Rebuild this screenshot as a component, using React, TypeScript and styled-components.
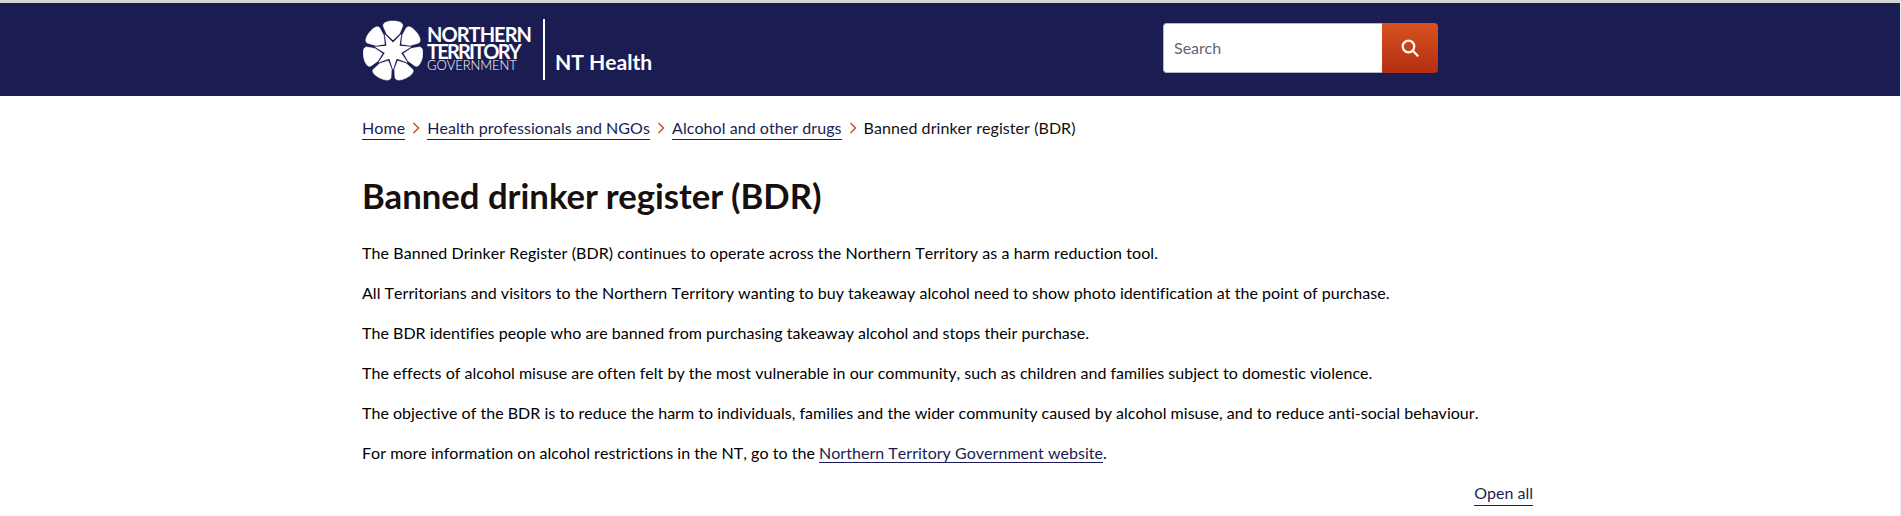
import React, { FC } from 'react';
import styled, { createGlobalStyle } from 'styled-components';

const GlobalStyle = createGlobalStyle`
  html, body {
    margin: 0;
    padding: 0;
    background: #fff;
    height: 516px;
    overflow: hidden;
  }
  body {
    font-family: Lato, 'Liberation Sans', sans-serif;
    color: #000;
    border-top: 3px solid #d4d4d4;
    border-right: 1px solid #ececec;
    box-sizing: border-box;
    font-kerning: none;
    font-variant-ligatures: none;
  }
`;

const Header = styled('header')`
  background: #1b1d52;
  height: 93px;
`;

const HeaderInner = styled('div')`
  display: flex;
  align-items: flex-start;
  padding-left: 362px;
`;

const Brand = styled('a')`
  display: flex;
  align-items: flex-start;
  width: 801px;
  padding-top: 16px;
  color: #fff;
  text-decoration: none;
`;

const Wordmark = styled('div')`
  display: flex;
  flex-direction: column;
  margin: 7px 0 0 4px;
  width: 105px;
`;

const WordLine = styled('span')<{ spacing: number; light?: boolean }>`
  display: block;
  white-space: nowrap;
  font-size: ${props => (props.light ? '13px' : '20px')};
  font-weight: ${props => (props.light ? 300 : 700)};
  line-height: ${props => (props.light ? '12px' : '16.5px')};
  letter-spacing: ${props => props.spacing}px;
`;

const Divider = styled('div')`
  width: 2px;
  height: 61px;
  background: #fff;
  margin-left: 11px;
`;

const SiteName = styled('span')`
  font-size: 21.1px;
  font-weight: 700;
  line-height: 25px;
  margin: 30px 0 0 10px;
`;

const SearchForm = styled('form')`
  display: flex;
  margin-top: 20px;
  width: 275px;
  height: 50px;
`;

const SearchInput = styled('input')`
  flex: 1;
  min-width: 0;
  box-sizing: border-box;
  border: 1px solid #b3b6cb;
  border-right: 0;
  border-radius: 4px 0 0 4px;
  padding: 0 10px 2px;
  background: #fff;
  font-family: Lato, sans-serif;
  font-size: 16px;
  outline: none;
  &::placeholder {
    color: #5f6770;
    opacity: 1;
  }
`;

const SearchButton = styled('button')`
  width: 56px;
  border: 0;
  padding: 0;
  border-radius: 0 4px 4px 0;
  background: linear-gradient(#d8521f, #b32f12);
  display: flex;
  align-items: center;
  justify-content: center;
`;

const Main = styled('main')`
  width: 1171px;
  padding-left: 362px;
  font-size: 16px;
`;

const Breadcrumbs = styled('nav')`
  display: flex;
  align-items: center;
  margin-top: 20px;
  height: 24px;
  line-height: 24px;
  letter-spacing: 0.06px;
`;

const TextLink = styled('a')`
  color: #1b1d52;
  text-decoration: none;
  border-bottom: 1px solid #1b1d52;
`;

const Crumb = styled(TextLink)`
  line-height: 22px;
`;

const Chevron = styled('svg')`
  width: 8px;
  height: 12px;
  margin: 0 7px;
  flex: none;
`;

const Current = styled('span')`
  color: #111;
`;

const Title = styled('h1')`
  margin: 34px 0 23px;
  font-size: 34.7px;
  font-kerning: normal;
  line-height: 44px;
  font-weight: 700;
  color: #17100e;
`;

const Paragraph = styled('p')<{ tracking: number }>`
  margin: 16px 0 0;
  line-height: 24px;
  letter-spacing: ${props => props.tracking}px;
`;

const Actions = styled('div')`
  display: flex;
  justify-content: flex-end;
  margin-top: 16px;
  line-height: 24px;
`;

const FlowerLogo = styled('svg')`
  width: 60px;
  height: 62px;
  flex: none;
  margin: 1px 0 0 1px;
`;

const petalAngles = [0, 1, 2, 3, 4, 5, 6].map(i => (i * 360) / 7);

// seven-pointed star in the middle, its tips lying in the gaps between the petals
const starPoints = petalAngles
  .flatMap(angle => {
    const inner = (angle * Math.PI) / 180;
    const outer = ((angle + 180 / 7) * Math.PI) / 180;
    return [
      [30 + 8.5 * Math.sin(inner), 31 - 8.5 * Math.cos(inner)],
      [30 + 19 * Math.sin(outer), 31 - 19 * Math.cos(outer)],
    ];
  })
  .map(([x, y]) => `${x.toFixed(2)},${y.toFixed(2)}`)
  .join(' ');

const Flower = () => (
  <FlowerLogo viewBox="0 0 60 62" fill="#fff">
    {petalAngles.map(angle => (
      <path
        key={angle}
        transform={`rotate(${angle} 30 31)`}
        d="M30 20 L23.6 14 L20.8 7.4 C18.4 3.6 23 1 30 1 C37 1 41.6 3.6 39.2 7.4 L36.4 14 Z"
        stroke="#fff"
        strokeWidth="0.6"
        strokeLinejoin="round"
      />
    ))}
    <polygon points={starPoints} />
  </FlowerLogo>
);

const SearchIcon = () => (
  <svg width="18" height="18" viewBox="0 0 18 18" fill="none" stroke="#fff" strokeWidth="2.2">
    <circle cx="7.5" cy="7.5" r="5.8" />
    <path d="M11.8 11.8 L16.6 16.6" strokeLinecap="round" />
  </svg>
);

const crumbs = ['Home', 'Health professionals and NGOs', 'Alcohol and other drugs'];

const paragraphs = [
  {
    text: 'The Banned Drinker Register (BDR) continues to operate across the Northern Territory as a harm reduction tool.',
    tracking: 0.077,
  },
  {
    text: 'All Territorians and visitors to the Northern Territory wanting to buy takeaway alcohol need to show photo identification at the point of purchase.',
    tracking: 0.033,
  },
  {
    text: 'The BDR identifies people who are banned from purchasing takeaway alcohol and stops their purchase.',
    tracking: 0.024,
  },
  {
    text: 'The effects of alcohol misuse are often felt by the most vulnerable in our community, such as children and families subject to domestic violence.',
    tracking: 0.017,
  },
  {
    text: 'The objective of the BDR is to reduce the harm to individuals, families and the wider community caused by alcohol misuse, and to reduce anti-social behaviour.',
    tracking: 0.024,
  },
];

const App: FC = () => (
  <>
    <GlobalStyle />
    <Header>
      <HeaderInner>
        <Brand href="#">
          <Flower />
          <Wordmark>
            <WordLine spacing={-0.95}>NORTHERN</WordLine>
            <WordLine spacing={-1.8}>TERRITORY</WordLine>
            <WordLine spacing={-0.05} light>
              GOVERNMENT
            </WordLine>
          </Wordmark>
          <Divider />
          <SiteName>NT Health</SiteName>
        </Brand>
        <SearchForm>
          <SearchInput placeholder="Search" />
          <SearchButton type="button" aria-label="Search">
            <SearchIcon />
          </SearchButton>
        </SearchForm>
      </HeaderInner>
    </Header>
    <Main>
      <Breadcrumbs>
        {crumbs.map(crumb => (
          <React.Fragment key={crumb}>
            <Crumb href="#">{crumb}</Crumb>
            <Chevron viewBox="0 0 8 12" fill="none" stroke="#d2511f" strokeWidth="1.5">
              <path d="M1.5 1 L6.5 6 L1.5 11" />
            </Chevron>
          </React.Fragment>
        ))}
        <Current>Banned drinker register (BDR)</Current>
      </Breadcrumbs>
      <Title>Banned drinker register (BDR)</Title>
      {paragraphs.map(({ text, tracking }) => (
        <Paragraph key={text} tracking={tracking}>
          {text}
        </Paragraph>
      ))}
      <Paragraph tracking={0.03}>
        For more information on alcohol restrictions in the NT, go to the{' '}
        <TextLink href="#">Northern Territory Government website</TextLink>.
      </Paragraph>
      <Actions>
        <TextLink href="#">Open all</TextLink>
      </Actions>
    </Main>
  </>
);

export default App;
